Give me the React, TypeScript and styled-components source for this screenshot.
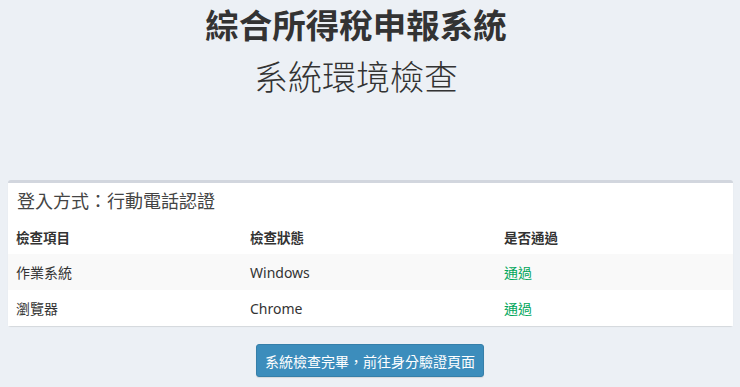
import React from "react";
import styled, { createGlobalStyle } from "styled-components";

const GlobalStyle = createGlobalStyle`
  html, body {
    margin: 0;
    padding: 0;
    background: #ecf0f5;
  }
  body {
    font-family: "Noto Sans", "Noto Sans CJK TC", sans-serif;
    color: #333;
  }
`;

const Page = styled.div`
  width: 740px;
  height: 387px;
  padding-top: 4px;
  box-sizing: border-box;
  display: flex;
  flex-direction: column;
  align-items: center;
  overflow: hidden;
`;

const Heading = styled.div`
  align-self: stretch;
  padding-right: 28px;
  display: flex;
  flex-direction: column;
  align-items: center;
`;

const Title = styled.h1`
  margin: 0;
  font-family: "Noto Sans CJK TC", sans-serif;
  font-size: 33.5px;
  line-height: 40px;
  font-weight: 700;
  color: #333;
`;

const Subtitle = styled.h2`
  margin: 12px 0 0;
  font-family: "Noto Sans CJK TC", sans-serif;
  font-size: 34px;
  line-height: 40px;
  font-weight: 300;
  color: #333;
`;

const Box = styled.section`
  align-self: stretch;
  margin: 84px 7px 0 8px;
  background: #fff;
  border-top: 3px solid #d2d6de;
  border-radius: 3px;
  box-shadow: 0 1px 1px rgba(0, 0, 0, 0.1);
`;

const BoxHeader = styled.div`
  padding: 6px 9px;
  font-size: 18px;
  line-height: 24px;
  color: #444;
`;

const Table = styled.table`
  width: 100%;
  border-collapse: collapse;
  table-layout: fixed;
  font-size: 14px;
`;

const Th = styled.th<{ $w?: string }>`
  height: 35px;
  padding: 0 8px;
  text-align: left;
  font-weight: 700;
  font-size: 13.5px;
  color: #333;
  width: ${(p) => p.$w || "auto"};
`;

const Row = styled.tr<{ $striped?: boolean }>`
  background: ${(p) => (p.$striped ? "#f9f9f9" : "#fff")};
`;

const Td = styled.td<{ $pass?: boolean }>`
  height: 36px;
  padding: 0 8px;
  color: ${(p) => (p.$pass ? "#00a65a" : "#333")};
`;

const Button = styled.button`
  margin-top: 18px;
  height: 33px;
  width: 228px;
  background: #3c8dbc;
  border: 1px solid #367fa9;
  border-radius: 3px;
  color: #fff;
  font-family: "Noto Sans CJK TC", sans-serif;
  font-size: 14px;
  box-shadow: 0 1px 1px rgba(0, 0, 0, 0.1);
  cursor: pointer;
`;

const rows = [
  { item: "作業系統", status: "Windows", result: "通過" },
  { item: "瀏覽器", status: "Chrome", result: "通過" },
];

export default function App() {
  return (
    <Page>
      <GlobalStyle />
      <Heading>
        <Title>綜合所得稅申報系統</Title>
        <Subtitle>系統環境檢查</Subtitle>
      </Heading>
      <Box>
        <BoxHeader>登入方式：行動電話認證</BoxHeader>
        <Table>
          <thead>
            <tr>
              <Th $w="218px">檢查項目</Th>
              <Th $w="238px">檢查狀態</Th>
              <Th>是否通過</Th>
            </tr>
          </thead>
          <tbody>
            {rows.map((r, i) => (
              <Row key={r.item} $striped={i % 2 === 0}>
                <Td>{r.item}</Td>
                <Td>{r.status}</Td>
                <Td $pass>{r.result}</Td>
              </Row>
            ))}
          </tbody>
        </Table>
      </Box>
      <Button>系統檢查完畢，前往身分驗證頁面</Button>
    </Page>
  );
}
